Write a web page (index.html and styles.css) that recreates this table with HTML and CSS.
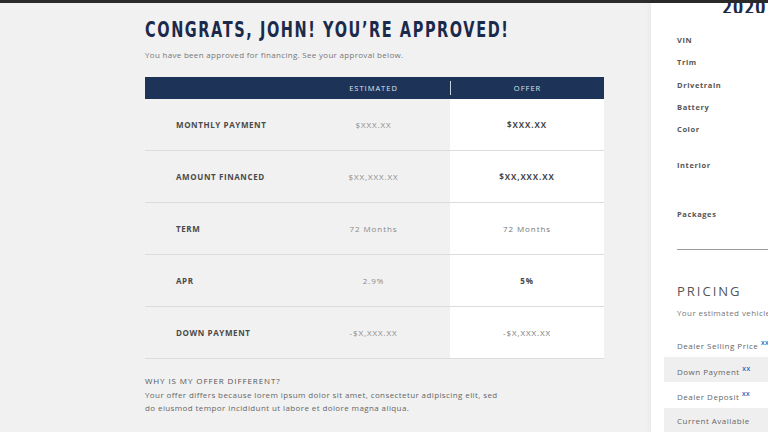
FILE: index.html
```html
<!DOCTYPE html>
<html lang="en">
<head>
    <meta charset="UTF-8">
    <meta name="viewport" content="width=device-width, initial-scale=1.0">
    <title>Approved</title>
    <link rel="stylesheet" href="styles.css">
</head>
<body>

<div class="topbar"></div>
<div class="page">
    <div class="main">
        <h1 class="title"><span>CONGRATS, JOHN! YOU’RE APPROVED!</span></h1>
        <p class="subtitle">You have been approved for financing. See your approval below.</p>

        <div class="offer-table">
            <div class="head">
                <div class="cell"></div>
                <div class="cell">ESTIMATED</div>
                <div class="cell divider">OFFER</div>
            </div>
            <div class="row">
                <div class="label">MONTHLY PAYMENT</div>
                <div class="est">$XXX.XX</div>
                <div class="offer bold">$XXX.XX</div>
            </div>
            <div class="row">
                <div class="label">AMOUNT FINANCED</div>
                <div class="est">$XX,XXX.XX</div>
                <div class="offer bold">$XX,XXX.XX</div>
            </div>
            <div class="row">
                <div class="label">TERM</div>
                <div class="est">72 Months</div>
                <div class="offer">72 Months</div>
            </div>
            <div class="row">
                <div class="label">APR</div>
                <div class="est">2.9%</div>
                <div class="offer bold">5%</div>
            </div>
            <div class="row">
                <div class="label">DOWN PAYMENT</div>
                <div class="est">-$X,XXX.XX</div>
                <div class="offer">-$X,XXX.XX</div>
            </div>
        </div>

        <div class="why">
            <h3>WHY IS MY OFFER DIFFERENT?</h3>
            <p>Your offer differs because lorem ipsum dolor sit amet, consectetur adipiscing elit, sed<br>do eiusmod tempor incididunt ut labore et dolore magna aliqua.</p>
        </div>
    </div>

    <div class="sidebar">
        <div class="car-title"><span>2020</span></div>
        <ul class="specs">
            <li>VIN</li>
            <li>Trim</li>
            <li>Drivetrain</li>
            <li>Battery</li>
            <li>Color</li>
            <li class="tall">Interior</li>
            <li class="taller">Packages</li>
        </ul>
        <hr class="rule">
        <h2 class="pricing">PRICING</h2>
        <p class="est-note">Your estimated vehicle</p>
        <div class="price-rows">
            <div class="price-row">Dealer Selling Price <sup>XX</sup></div>
            <div class="price-row shaded">Down Payment <sup>XX</sup></div>
            <div class="price-row">Dealer Deposit <sup>XX</sup></div>
            <div class="price-row shaded">Current Available</div>
        </div>
    </div>
</div>

</body>
</html>
```

FILE: styles.css
```css
body {
    margin: 0;
    background-color: #f1f1f1;
    font-family: "Open Sans", "DejaVu Sans", sans-serif;
    overflow: hidden;
    height: 432px;
}
.topbar {
    height: 3px;
    background: #2b2b2b;
}
.page {
    display: flex;
    height: 429px;
}
.main {
    width: 651px;
    padding-left: 145px;
    box-sizing: border-box;
}
/* no condensed face installed, so squeeze DejaVu Bold */
.title {
    margin: 13px 0 0;
    font-family: "DejaVu Sans", sans-serif;
    font-weight: bold;
    font-size: 21px;
    letter-spacing: 2.3px;
    color: #1b2a4a;
    line-height: 28px;
    white-space: nowrap;
}
.title span,
.car-title span {
    display: inline-block;
    transform: scaleX(0.69);
    transform-origin: left center;
}
.subtitle {
    margin: 5px 0 0;
    font-size: 8px;
    color: #777;
    letter-spacing: 0.3px;
}
.offer-table {
    width: 459px;
    margin-top: 17px;
}
.head {
    display: grid;
    grid-template-columns: 152px 153px 154px;
    background: #1e3358;
    padding: 4px 0;
}
.head .cell {
    height: 14px;
    line-height: 14px;
    text-align: center;
    color: #dfe4ec;
    font-size: 7.5px;
    letter-spacing: 1px;
}
.head .divider {
    border-left: 1px solid #c9d0dc;
}
.row {
    display: grid;
    grid-template-columns: 152px 153px 154px;
    height: 52px;
    border-bottom: 1px solid #dcdcdc;
    box-sizing: border-box;
    align-items: center;
    font-size: 8px;
    letter-spacing: 0.9px;
}
.label {
    padding-left: 31px;
    font-weight: bold;
    color: #4a4a4a;
    letter-spacing: 0.6px;
}
.est {
    text-align: center;
    color: #8a8a8a;
}
.offer {
    text-align: center;
    color: #777;
    background: #fff;
    height: 100%;
    line-height: 51px;
}
.offer.bold {
    font-weight: bold;
    color: #444;
}
.why {
    margin-top: 16px;
}
.why h3 {
    margin: 0;
    font-size: 8px;
    font-weight: normal;
    color: #555;
    letter-spacing: 0.9px;
}
.why p {
    margin: 2px 0 0;
    font-size: 8px;
    line-height: 13px;
    color: #666;
    letter-spacing: 0.4px;
}
.sidebar {
    flex: 1;
    background: #fff;
    padding-left: 26px;
    overflow: hidden;
    box-shadow: -2px 0 4px rgba(0, 0, 0, 0.04);
}
.car-title {
    height: 10px;
    margin-left: 45px;
    font-family: "DejaVu Sans", sans-serif;
    font-weight: bold;
    font-size: 21px;
    letter-spacing: 1.5px;
    color: #1b2a4a;
    line-height: 10px;
    white-space: nowrap;
    overflow: hidden;
    display: flex;
    align-items: flex-end;
}
.specs {
    list-style: none;
    margin: 21px 0 0;
    padding: 0;
}
.specs li {
    height: 22.3px;
    line-height: 12px;
    font-size: 7.5px;
    font-weight: bold;
    color: #555;
    letter-spacing: 0.6px;
}
.specs li.tall {
    margin-top: 14px;
    height: 49px;
}
.specs li.taller {
    height: 41px;
}
.rule {
    margin: 0;
    border: none;
    border-top: 1px solid #9a9a9a;
}
.pricing {
    margin: 33px 0 0;
    font-size: 13px;
    font-weight: normal;
    letter-spacing: 2px;
    color: #555;
    line-height: 16px;
}
.est-note {
    margin: 8px 0 0;
    font-size: 8px;
    color: #777;
    letter-spacing: 0.4px;
    white-space: nowrap;
}
.price-rows {
    margin: 13px 0 0 -13px;
}
.price-row {
    height: 25.5px;
    line-height: 25.5px;
    padding-left: 13px;
    font-size: 8px;
    color: #666;
    letter-spacing: 0.5px;
    white-space: nowrap;
}
.price-row.shaded {
    background: #efefef;
}
.price-row sup {
    font-size: 5.5px;
    color: #2d6cc0;
    font-weight: bold;
}
```
